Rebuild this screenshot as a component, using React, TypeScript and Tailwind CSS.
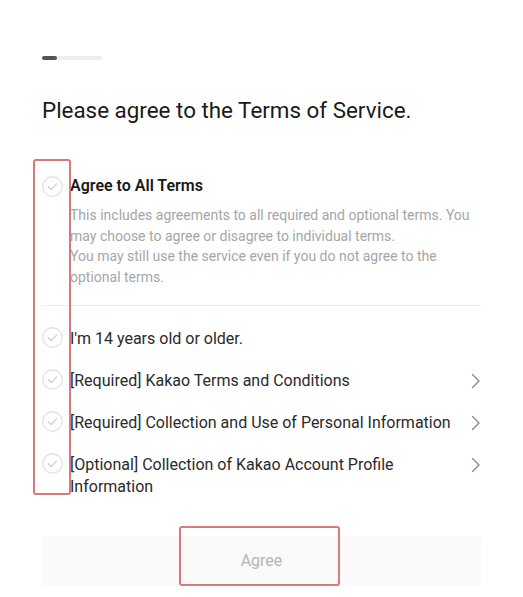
import React from 'react'

const terms = [
  { label: "I'm 14 years old or older.", link: false },
  { label: '[Required] Kakao Terms and Conditions', link: true },
  { label: '[Required] Collection and Use of Personal Information', link: true },
  { label: '[Optional] Collection of Kakao Account Profile Information', link: true },
]

function CheckCircle() {
  return (
    <svg width="21" height="21" viewBox="0 0 21 21" fill="none" className="shrink-0">
      <circle cx="10.5" cy="10.5" r="9.75" stroke="#e2e2e2" strokeWidth="1.3" />
      <path d="M6.3 10.8 L9.3 13.6 L14.6 7.9" stroke="#cfcfcf" strokeWidth="1.3" strokeLinecap="round" strokeLinejoin="round" />
    </svg>
  )
}

function Chevron() {
  return (
    <svg width="10" height="16" viewBox="0 0 10 16" fill="none" className="shrink-0">
      <path d="M1.5 1.5 L8 8 L1.5 14.5" stroke="#8a8a8a" strokeWidth="1.4" strokeLinecap="round" strokeLinejoin="round" />
    </svg>
  )
}

export default function App() {
  return (
    <div
      className="relative min-h-[597px] w-[523px] bg-white px-[42px] pt-[56px]"
      style={{ fontFamily: 'Roboto, "Noto Sans", sans-serif' }}
    >
      <div className="h-1 w-[60px] rounded-full bg-[#eeeeee]">
        <div className="h-1 w-[15px] rounded-full bg-[#555555]" />
      </div>

      <h1 className="mt-[35px] text-[22.4px] leading-[30px] font-normal text-[#1a1a1a]">
        Please agree to the Terms of Service.
      </h1>

      <div className="mt-[50px] flex items-start gap-[7px]">
        <div className="mt-px">
          <CheckCircle />
        </div>
        <div>
          <p className="text-base leading-[22px] font-semibold text-[#1a1a1a]">Agree to All Terms</p>
          <p className="mt-[8px] text-sm leading-[20.5px] text-[#a6a6a6]">
            This includes agreements to all required and optional terms. You may choose to agree or
            disagree to individual terms.
            <br />
            You may still use the service even if you do not agree to the optional terms.
          </p>
        </div>
      </div>

      <div className="mt-[18px] h-px bg-[#ececec]" />

      <ul className="mt-[22px] flex flex-col gap-5">
        {terms.map((term) => (
          <li key={term.label} className="flex items-start gap-[7px]">
            <div className="-mt-px">
              <CheckCircle />
            </div>
            <span className="flex-1 text-base leading-[22px] text-[#2a2a2a]">{term.label}</span>
            {term.link && (
              <div className="mt-[3px]">
                <Chevron />
              </div>
            )}
          </li>
        ))}
      </ul>

      <button
        type="button"
        className="mt-[38px] flex h-[50px] w-full items-center justify-center rounded-sm bg-[#fafafa] text-base text-[#b5b5b5]"
      >
        Agree
      </button>

      <div className="pointer-events-none absolute top-[159px] left-[33px] h-[336px] w-[38px] rounded-[3px] border-2 border-[#d9797b]" />
      <div className="pointer-events-none absolute top-[526px] left-[179px] h-[60px] w-[161px] rounded-[3px] border-2 border-[#d9797b]" />
    </div>
  )
}
